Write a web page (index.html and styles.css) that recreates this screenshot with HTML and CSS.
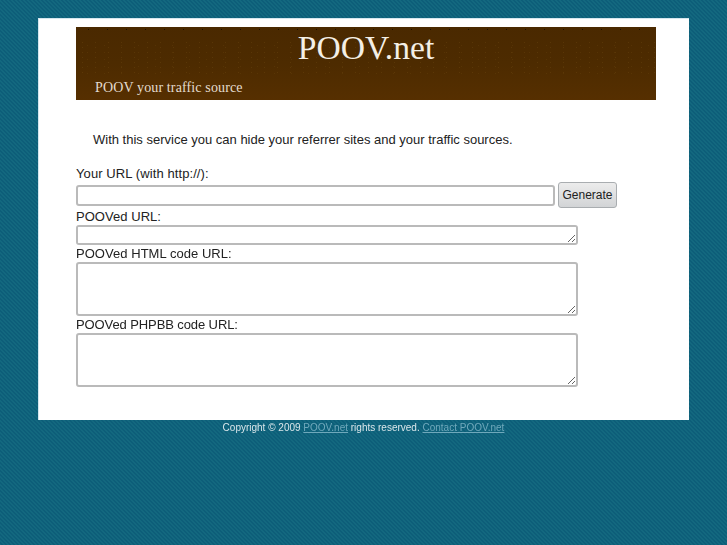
FILE: index.html
```html
<!DOCTYPE html>
<html lang="en">
<head>
<meta charset="utf-8">
<title>POOV.net</title>
<link rel="stylesheet" href="styles.css">
</head>
<body>
<div class="page">
  <header class="banner">
    <h1 class="title">POOV.net</h1>
    <p class="tagline">POOV your traffic source</p>
  </header>
  <p class="intro">With this service you can hide your referrer sites and your traffic sources.</p>
  <form class="form">
    <label class="label">Your URL (with http://):</label>
    <div class="url-row">
      <input class="url-input" type="text">
      <button class="generate" type="button">Generate</button>
    </div>
    <label class="label label-snug">POOVed URL:</label>
    <textarea class="area area-small"></textarea>
    <label class="label label-snug">POOVed HTML code URL:</label>
    <textarea class="area area-large"></textarea>
    <label class="label label-narrow">POOVed PHPBB code URL:</label>
    <textarea class="area area-large"></textarea>
  </form>
</div>
<footer class="footer">Copyright © 2009 <a href="#">POOV.net</a> rights reserved. <a href="#">Contact POOV.net</a></footer>
</body>
</html>
```
FILE: styles.css
```css
html, body { margin: 0; padding: 0; }
body {
  height: 545px;
  overflow: hidden;
  box-sizing: border-box;
  padding-top: 18px;
  font-family: "Liberation Sans", Arial, sans-serif;
  color: #222;
  background-color: #12667f;
  background-image: linear-gradient(45deg, #0d5e79 25%, #13687f 25%, #13687f 50%, #0d5e79 50%, #0d5e79 75%, #13687f 75%);
  background-size: 4px 4px;
}
.page {
  width: 651px;
  height: 402px;
  margin: 0 auto;
  box-sizing: border-box;
  padding: 9px 33px 0 38px;
  background: #fff;
  box-shadow: inset 1px 1px 0 #d5e6ee;
}
.banner {
  position: relative;
  height: 73px;
  box-sizing: border-box;
  padding-left: 19px;
  overflow: hidden;
  color: #f4efe6;
  background-color: #522e00;
  background-image:
    radial-gradient(circle, #1d1204 0.6px, transparent 0.8px),
    linear-gradient(#4a2900, #4d2b00 50%, #562f00);
  background-size: 19px 5px, 100% 100%;
  background-position: 3px 0, 0 0;
  background-repeat: repeat-x, no-repeat;
}
.banner::before {
  content: "";
  position: absolute;
  left: 0;
  right: 0;
  top: 13px;
  height: 36px;
  background-image:
    radial-gradient(circle, #8a6420 0.5px, transparent 0.7px),
    radial-gradient(circle, #7a5518 0.5px, transparent 0.7px);
  background-size: 13px 5px, 17px 7px;
  background-position: 0 0, 3px 2px;
  opacity: 0.22;
}
.title, .tagline { position: relative; }
.title {
  margin: 0;
  height: 42px;
  padding-right: 19px;
  font: 400 33.6px/42px "Liberation Serif", "Times New Roman", serif;
  text-align: center;
}
.tagline {
  margin: 10px 0 0;
  font: 400 14px/18px "Liberation Serif", "Times New Roman", serif;
  letter-spacing: 0.13px;
  color: #e3dccf;
}
.intro {
  margin: 31px 0 0 17px;
  font-size: 13px;
  line-height: 17px;
}
.form { margin-top: 18px; display: flex; flex-direction: column; align-items: flex-start; }
.label { display: block; font-size: 13px; line-height: 16px; letter-spacing: 0.09px; }
.label-snug { letter-spacing: 0.04px; }
.label-narrow { letter-spacing: -0.1px; }
.url-row { display: flex; align-items: center; height: 26px; margin-bottom: 1px; }
.url-input, .area {
  box-sizing: border-box;
  margin: 0;
  padding: 2px;
  background: #fff;
  border: 2px solid #bababa;
  border-radius: 3px;
  outline: none;
  display: block;
  font: 13px "Liberation Sans", Arial, sans-serif;
}
.url-input { width: 479px; height: 21px; }
.generate {
  width: 59px;
  height: 26px;
  margin-left: 3px;
  padding: 0;
  font: 12px "Liberation Sans", Arial, sans-serif;
  color: #222;
  background: linear-gradient(#ececec, #d2d4d6);
  border: 1px solid #a9adb0;
  border-radius: 3px;
}
.area { width: 502px; resize: both; }
.area-small { height: 20px; margin-bottom: 1px; }
.area-large { height: 54px; margin-bottom: 1px; }
.footer {
  margin-top: 1px;
  text-align: center;
  font-size: 10px;
  line-height: 13px;
  color: #d9e6ea;
}
.footer a { color: #6fa8bb; text-decoration: underline; }
```
